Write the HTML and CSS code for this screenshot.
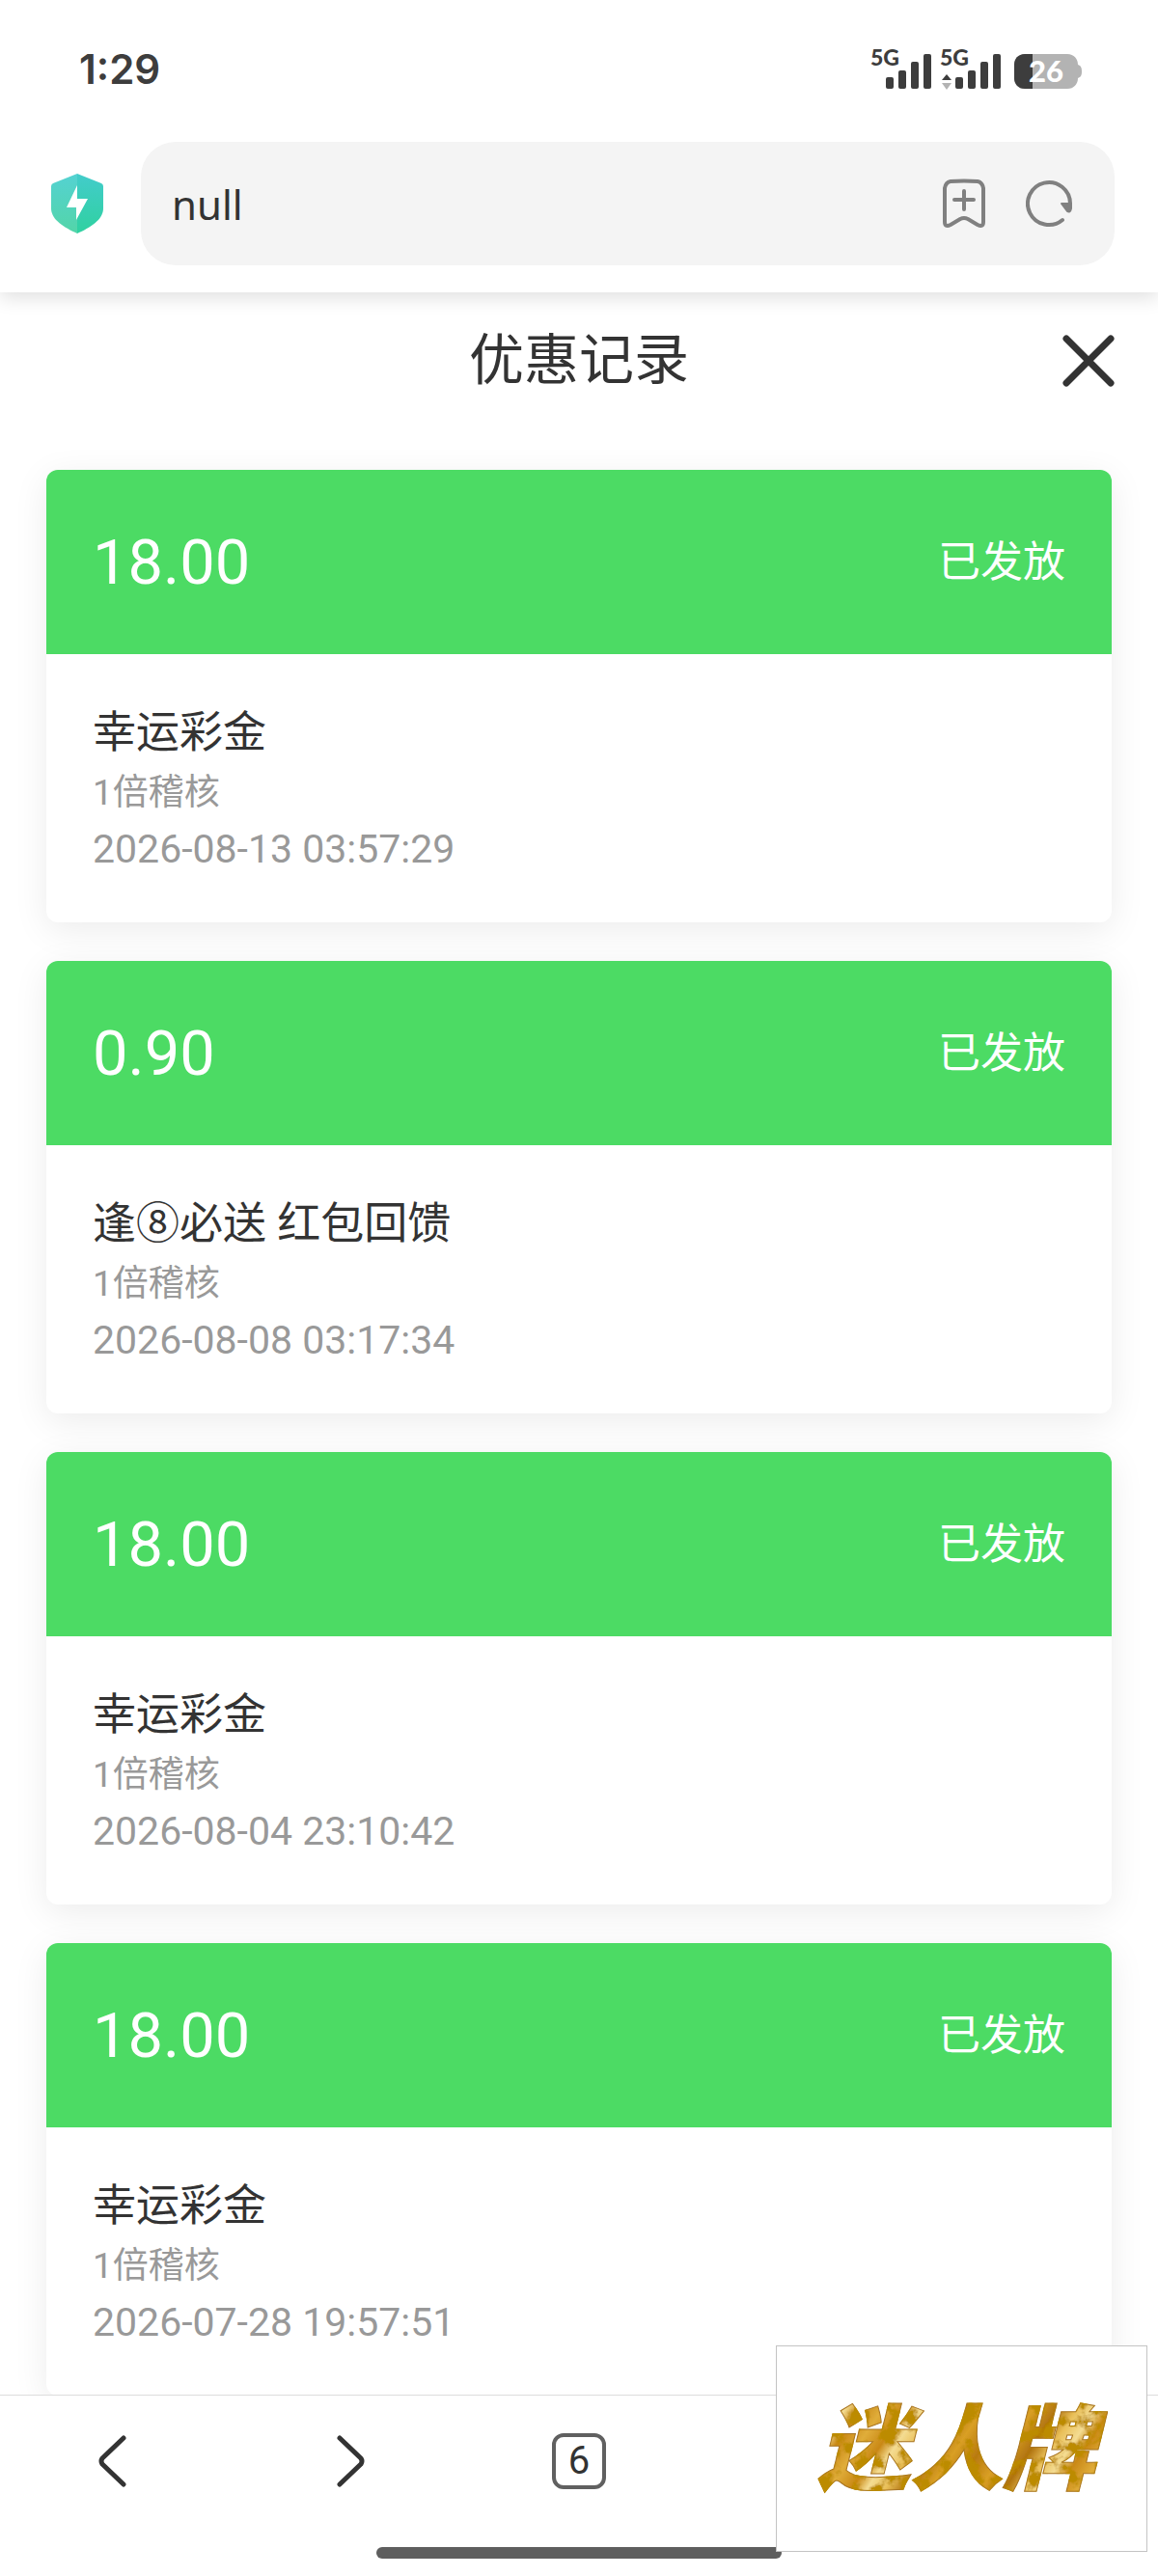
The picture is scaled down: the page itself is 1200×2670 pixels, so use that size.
FILE: index.html
```html
<!DOCTYPE html>
<html lang="zh-CN">
<head>
  <meta charset="UTF-8">
  <meta name="viewport" content="width=device-width, initial-scale=1.0">
  <title>优惠记录</title>
  <link rel="stylesheet" href="styles.css">
</head>
<body>

<header class="browser-top">
  <div class="status-bar">
    <span class="time">1:29</span>
    <svg class="status-icons" width="222" height="60" viewBox="0 -8 222 60">
      <g fill="#3d3d3d">
        <text class="net" x="2" y="18">5G</text>
        <rect x="18" y="30" width="8" height="12" rx="2"/>
        <rect x="31" y="23" width="8" height="19" rx="2"/>
        <rect x="44" y="14" width="8" height="28" rx="2"/>
        <rect x="57" y="6" width="8" height="36" rx="2"/>
        <text class="net" x="74" y="18">5G</text>
        <path d="M81 27l5 6H76z"/>
        <rect x="90" y="30" width="8" height="12" rx="2"/>
        <rect x="103" y="23" width="8" height="19" rx="2"/>
        <rect x="116" y="14" width="8" height="28" rx="2"/>
        <rect x="129" y="6" width="8" height="36" rx="2"/>
      </g>
      <path d="M76 36h10l-5 7z" fill="#b3b3b3"/>
      <path d="M162 6h44c7 0 11 5 11 11 3 1 4 3 4 7s-1 6-4 7c0 6-4 11-11 11h-44c-7 0-11-5-11-11V17c0-6 4-11 11-11z" fill="#b3b3b3"/>
      <path d="M170 6h-8c-7 0-11 5-11 11v14c0 6 4 11 11 11h8z" fill="#3d3d3d"/>
      <text class="battery" x="166" y="35">26</text>
    </svg>
  </div>

  <form class="address-row">
    <svg class="shield" width="56" height="64" viewBox="0 0 56 64">
      <defs>
        <linearGradient id="shieldL" x1="0" y1="0" x2="0" y2="1">
          <stop offset="0" stop-color="#54d2d2"/>
          <stop offset="1" stop-color="#53d5a8"/>
        </linearGradient>
        <linearGradient id="shieldR" x1="0" y1="0" x2="0" y2="1">
          <stop offset="0" stop-color="#43cccb"/>
          <stop offset="1" stop-color="#2fd1a0"/>
        </linearGradient>
      </defs>
      <path d="M28 1L3 11q-2 1-2 3v23c0 12 14 20 27 26z" fill="url(#shieldL)"/>
      <path d="M28 1l25 10q2 1 2 3v23c0 12-14 20-27 26z" fill="url(#shieldR)"/>
      <path d="M28 13L17 36h10v13l12-22H28z" fill="#fff"/>
    </svg>
    <div class="address-box">
      <input type="text" class="address-input" aria-label="网址" value="null">
      <button type="button" class="icon-btn" aria-label="收藏">
        <svg width="48" height="52" viewBox="0 0 48 52" fill="none" stroke="#808080" stroke-width="4" stroke-linecap="round" stroke-linejoin="round">
          <path d="M10 3Q24 2 38 3Q43 4 44 10V45Q44 51 38 48L28 42Q24 40 20 42L10 48Q4 51 4 45V10Q5 4 10 3z"/>
          <path d="M24 13v19M14 22h20"/>
        </svg>
      </button>
      <button type="button" class="icon-btn" aria-label="刷新">
        <svg width="50" height="50" viewBox="0 0 50 50" fill="none" stroke="#808080" stroke-width="4" stroke-linecap="round" stroke-linejoin="round">
          <path d="M38 42A22 22 0 1 1 46 25"/>
          <path d="M37 25h10v5q-1 5-4 3z" fill="#808080" stroke-width="2"/>
        </svg>
      </button>
    </div>
  </form>
</header>

<main class="page">
  <div class="title-bar">
    <h1>优惠记录</h1>
    <button type="button" class="close-btn" aria-label="关闭">
      <svg width="54" height="54" viewBox="0 0 54 54" stroke="#333" stroke-width="7" stroke-linecap="round">
        <path d="M4 4l46 46M50 4L4 50"/>
      </svg>
    </button>
  </div>

  <div class="record-list">
    <article class="record">
      <div class="record-head">
        <span class="amount">18.00</span>
        <span class="state">已发放</span>
      </div>
      <div class="record-body">
        <h2>幸运彩金</h2>
        <p>1倍稽核</p>
        <p class="date">2026-08-13 03:57:29</p>
      </div>
    </article>

    <article class="record">
      <div class="record-head">
        <span class="amount">0.90</span>
        <span class="state">已发放</span>
      </div>
      <div class="record-body">
        <h2>逢⑧必送 红包回馈</h2>
        <p>1倍稽核</p>
        <p class="date">2026-08-08 03:17:34</p>
      </div>
    </article>

    <article class="record">
      <div class="record-head">
        <span class="amount">18.00</span>
        <span class="state">已发放</span>
      </div>
      <div class="record-body">
        <h2>幸运彩金</h2>
        <p>1倍稽核</p>
        <p class="date">2026-08-04 23:10:42</p>
      </div>
    </article>

    <article class="record">
      <div class="record-head">
        <span class="amount">18.00</span>
        <span class="state">已发放</span>
      </div>
      <div class="record-body">
        <h2>幸运彩金</h2>
        <p>1倍稽核</p>
        <p class="date">2026-07-28 19:57:51</p>
      </div>
    </article>
  </div>
</main>

<footer class="browser-bottom">
  <nav class="toolbar">
    <button type="button" class="icon-btn" aria-label="后退">
      <svg width="38" height="56" viewBox="0 0 38 56" fill="none" stroke="#333" stroke-width="5" stroke-linecap="round" stroke-linejoin="round">
        <path d="M27 4L5 25q-2 3 0 6l22 21"/>
      </svg>
    </button>
    <button type="button" class="icon-btn" aria-label="前进">
      <svg width="38" height="56" viewBox="0 0 38 56" fill="none" stroke="#333" stroke-width="5" stroke-linecap="round" stroke-linejoin="round">
        <path d="M11 4l22 21q2 3 0 6L11 52"/>
      </svg>
    </button>
    <button type="button" class="tab-count">6</button>
  </nav>
  <div class="home-bar"></div>
</footer>

<div class="brand">
  <svg width="360" height="180" viewBox="0 0 360 180">
    <defs>
      <linearGradient id="gold" x1="0" y1="0" x2="90" y2="60" gradientUnits="userSpaceOnUse" spreadMethod="reflect">
        <stop offset="0" stop-color="#b87a10"/>
        <stop offset=".2" stop-color="#d99f25"/>
        <stop offset=".4" stop-color="#b0730f"/>
        <stop offset=".55" stop-color="#e9bf58"/>
        <stop offset=".7" stop-color="#f4dc92"/>
        <stop offset=".82" stop-color="#c98816"/>
        <stop offset="1" stop-color="#e0ad3a"/>
      </linearGradient>
      <!-- marbled shading over the gold -->
      <filter id="grain" x="0" y="0" width="1" height="1">
        <feTurbulence type="fractalNoise" baseFrequency=".06" numOctaves="4" seed="4" result="noise"/>
        <feColorMatrix in="noise" type="matrix" values="0 0 0 0 .5  0 0 0 0 .26  0 0 0 0 0  6 0 0 0 -2.8" result="shade"/>
        <feComposite in="shade" in2="SourceAlpha" operator="in" result="spots"/>
        <feMerge>
          <feMergeNode in="SourceGraphic"/>
          <feMergeNode in="spots"/>
        </feMerge>
      </filter>
    </defs>
    <text class="brand-text" x="174" y="125" text-anchor="middle" filter="url(#grain)">迷人牌</text>
  </svg>
</div>

</body>
</html>
```

FILE: styles.css
```css
* {
  box-sizing: border-box;
}

body {
  margin: 0;
  height: 100vh;
  display: flex;
  flex-direction: column;
  background: #fff;
  color: #333;
  font-family: Roboto, "Noto Sans CJK SC", sans-serif;
}

h1, h2, p {
  margin: 0;
  font-weight: 400;
}

button {
  padding: 0;
  border: 0;
  background: none;
  color: inherit;
  font-family: inherit;
  cursor: pointer;
}

svg {
  display: block;
}

/* browser top */
.browser-top {
  position: relative;
  flex: none;
  padding-bottom: 28px;
  background: #fff;
  box-shadow: 0 6px 18px rgba(0, 0, 0, 0.12);
}

.status-bar {
  display: flex;
  align-items: center;
  justify-content: space-between;
  height: 147px;
  padding: 0 78px 4px 82px;
}

.time {
  font-family: Inter, sans-serif;
  font-size: 42px;
  font-weight: 600;
  color: #3d3d3d;
}

.net {
  font: 900 23px Lato, sans-serif;
}

.battery {
  font: 900 31px Lato, sans-serif;
  fill: #fff;
}

.address-row {
  display: flex;
  align-items: center;
  gap: 38px;
  padding: 0 45px 0 52px;
}

.shield {
  flex: none;
}

.address-box {
  flex: 1;
  display: flex;
  align-items: center;
  gap: 40px;
  height: 128px;
  padding: 0 42px 0 32px;
  border-radius: 36px;
  background: #f4f4f4;
}

.address-input {
  flex: 1;
  min-width: 0;
  padding: 0;
  border: 0;
  outline: 0;
  background: none;
  color: #333;
  font-family: "Noto Sans", sans-serif;
  font-size: 42px;
}

/* page */
.page {
  flex: 1;
  min-height: 0;
  overflow-y: auto;
  scrollbar-width: none;
}

.title-bar {
  position: relative;
  display: flex;
  align-items: center;
  justify-content: center;
  height: 142px;
}

.title-bar h1 {
  font-size: 57px;
  line-height: 80px;
}

.close-btn {
  position: absolute;
  right: 45px;
}

.record-list {
  display: flex;
  flex-direction: column;
  gap: 40px;
  padding: 42px 48px;
}

.record {
  border-radius: 12px;
  background: #fff;
  box-shadow: 0 8px 36px rgba(0, 0, 0, 0.08);
}

.record-head {
  display: flex;
  align-items: center;
  justify-content: space-between;
  height: 191px;
  padding: 0 48px;
  border-radius: 12px 12px 0 0;
  background: #4cdb64;
  color: #fff;
}

.amount {
  font-size: 65px;
}

.state {
  font-size: 44px;
  line-height: 66px;
}

.record-body {
  padding: 49px 48px 47px;
}

.record-body h2 {
  font-size: 45px;
  line-height: 66px;
}

.record-body p {
  font-size: 37px;
  line-height: 58px;
  color: #999;
}

.record-body .date {
  font-size: 41px;
}

/* browser bottom */
.browser-bottom {
  flex: none;
  position: relative;
  padding-bottom: 18px;
  border-top: 1px solid #ddd;
  background: #fff;
}

.toolbar {
  display: grid;
  grid-template-columns: repeat(5, 1fr);
  align-items: center;
  justify-items: center;
  height: 136px;
}

.tab-count {
  width: 56px;
  height: 58px;
  border: 4px solid #606060;
  border-radius: 12px;
  font-size: 40px;
  line-height: 50px;
}

.home-bar {
  width: 35%;
  height: 12px;
  margin: 21px auto 0;
  border-radius: 6px;
  background: #5e5e5e;
}

/* floating brand box over the toolbar */
.brand {
  position: fixed;
  right: 11px;
  bottom: 25px;
  display: flex;
  align-items: center;
  justify-content: center;
  width: 385px;
  height: 214px;
  border: 1px solid #c4c4c4;
  background: #fff;
}

.brand-text {
  font: italic 900 96px "Noto Sans CJK SC", sans-serif;
  fill: url(#gold);
  stroke: #a87420;
  stroke-width: 1px;
}
```
